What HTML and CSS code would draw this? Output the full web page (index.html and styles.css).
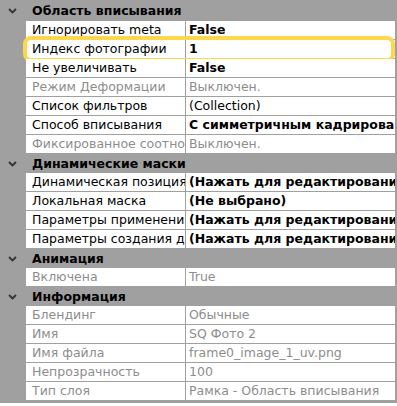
FILE: index.html
```html
<!DOCTYPE html>
<html lang="ru">
<head>
    <meta charset="UTF-8">
    <title>Свойства</title>
    <link rel="stylesheet" href="styles.css">
</head>
<body>
    <div class="grid">
        <div class="category first">
            <span class="chevron"><svg width="9" height="6" viewBox="0 0 9 6"><path d="M1 1 L4.5 4.5 L8 1" fill="none" stroke="#333" stroke-width="1.8"/></svg></span>
            <span class="cat-name">Область вписывания</span>
        </div>
        <div class="row"><span class="name">Игнорировать meta</span><span class="value bold">False</span></div>
        <div class="row selected"><span class="name">Индекс фотографии</span><span class="value bold">1</span></div>
        <div class="row"><span class="name">Не увеличивать</span><span class="value bold">False</span></div>
        <div class="row disabled"><span class="name">Режим Деформации</span><span class="value">Выключен.</span></div>
        <div class="row"><span class="name">Список фильтров</span><span class="value">(Collection)</span></div>
        <div class="row"><span class="name">Способ вписывания</span><span class="value bold">С симметричным кадрированием</span></div>
        <div class="row disabled"><span class="name">Фиксированное соотношение сторон</span><span class="value">Выключен.</span></div>

        <div class="category">
            <span class="chevron"><svg width="9" height="6" viewBox="0 0 9 6"><path d="M1 1 L4.5 4.5 L8 1" fill="none" stroke="#333" stroke-width="1.8"/></svg></span>
            <span class="cat-name">Динамические маски</span>
        </div>
        <div class="row"><span class="name">Динамическая позиция</span><span class="value bold">(Нажать для редактирования)</span></div>
        <div class="row"><span class="name">Локальная маска</span><span class="value bold">(Не выбрано)</span></div>
        <div class="row"><span class="name">Параметры применения</span><span class="value bold">(Нажать для редактирования)</span></div>
        <div class="row"><span class="name">Параметры создания динамики</span><span class="value bold">(Нажать для редактирования)</span></div>

        <div class="category">
            <span class="chevron"><svg width="9" height="6" viewBox="0 0 9 6"><path d="M1 1 L4.5 4.5 L8 1" fill="none" stroke="#333" stroke-width="1.8"/></svg></span>
            <span class="cat-name">Анимация</span>
        </div>
        <div class="row disabled"><span class="name">Включена</span><span class="value">True</span></div>

        <div class="category">
            <span class="chevron"><svg width="9" height="6" viewBox="0 0 9 6"><path d="M1 1 L4.5 4.5 L8 1" fill="none" stroke="#333" stroke-width="1.8"/></svg></span>
            <span class="cat-name">Информация</span>
        </div>
        <div class="row disabled"><span class="name">Блендинг</span><span class="value">Обычные</span></div>
        <div class="row disabled"><span class="name">Имя</span><span class="value">SQ Фото 2</span></div>
        <div class="row disabled"><span class="name">Имя файла</span><span class="value">frame0_image_1_uv.png</span></div>
        <div class="row disabled"><span class="name">Непрозрачность</span><span class="value">100</span></div>
        <div class="row disabled"><span class="name">Тип слоя</span><span class="value">Рамка - Область вписывания</span></div>
    </div>
    <div class="bottom-bar"></div>
</body>
</html>
```

FILE: styles.css
```css
body {
    margin: 0;
    background-color: #a0a0a0;
    font-family: 'DejaVu Sans', Verdana, sans-serif;
    font-size: 12.5px;
    color: #000000;
    width: 397px;
    height: 406px;
    overflow: hidden;
}
.grid {
    display: flex;
    flex-direction: column;
}
.category {
    display: flex;
    align-items: center;
    height: 19px;
}
.category.first {
    height: 21px;
}
.chevron {
    width: 32px;
    padding-left: 8px;
    box-sizing: border-box;
    display: flex;
    align-items: center;
}
.cat-name {
    font-weight: bold;
}
.row {
    display: flex;
    height: 18px;
    margin-left: 26px;
    margin-right: 2px;
    background-color: #ffffff;
    border-bottom: 1px solid #a0a0a0;
    line-height: 18px;
    position: relative;
}
.name {
    width: 160px;
    flex-shrink: 0;
    padding-left: 6px;
    box-sizing: border-box;
    border-right: 1px solid #a0a0a0;
    white-space: nowrap;
    overflow: hidden;
}
.value {
    padding-left: 3px;
    white-space: nowrap;
    overflow: hidden;
}
.bold {
    font-weight: bold;
}
.disabled {
    color: #8d8d8d;
}
.selected::after {
    content: "";
    position: absolute;
    top: -4px;
    bottom: -4px;
    left: -3px;
    right: 0;
    border: 4px solid #fdd84c;
    border-radius: 8px;
}
.bottom-bar {
    margin-top: 2px;
    height: 3px;
    background-color: #ffffff;
}
```
